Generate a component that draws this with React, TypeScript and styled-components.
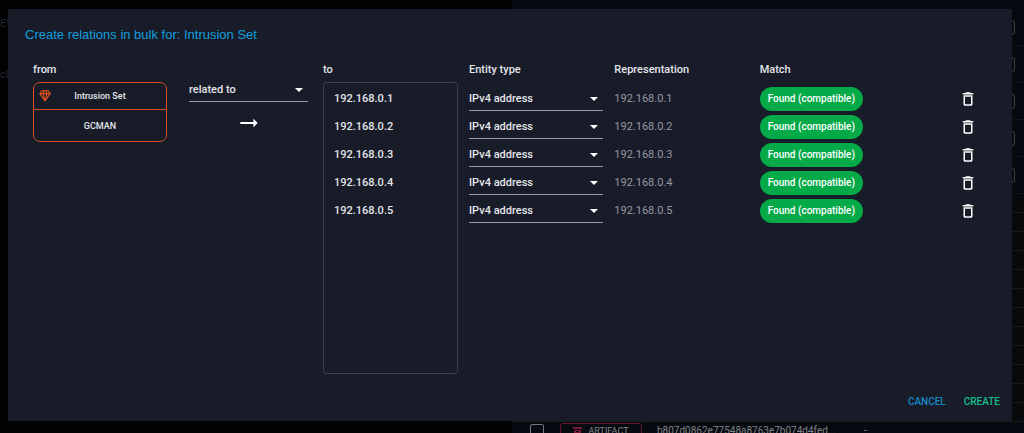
import React from 'react';
import styled, { createGlobalStyle } from 'styled-components';

const GlobalStyle = createGlobalStyle`
  *, *::before, *::after { box-sizing: border-box; }
  body {
    margin: 0;
    background: #010204;
    color: #e4e6ea;
    font-family: Roboto, "Liberation Sans", sans-serif;
    font-size: 11px;
    line-height: 16px;
  }
  button, select, textarea { font: inherit; color: inherit; }
`;

const Screen = styled.div`
  position: relative;
  display: flex;
  min-height: 100vh;
  padding: 9px 12px 12px 8px;
`;

/* Dimmed page behind the dialog */
const Behind = styled.div`
  position: absolute;
  inset: 0;
  display: grid;
  grid-template-columns: 1fr 1fr;
  overflow: hidden;
`;

const SidePane = styled.div`
  display: flex;
  flex-direction: column;
  gap: 35px;
  padding-top: 16px;
  color: #24272a;
`;

const ListPane = styled.div`
  display: flex;
  flex-direction: column;
  padding-top: 9px;
  background: #060a10;
`;

const ListRow = styled.div`
  display: flex;
  flex: none;
  align-items: center;
  justify-content: flex-end;
  height: 37px;
  padding-right: 9px;
  border-bottom: 1px solid #11151a;
`;

const RowAction = styled.span`
  width: 16px;
  height: 15px;
  border: 1px solid #3e4144;
  border-radius: 3px;
`;

const Lines = styled.div`
  flex: 1;
  display: flex;
  flex-direction: column;
  background: #08090b;
`;

const Line = styled.div`
  flex: 1;
  border-bottom: 1px solid #191a1c;
`;

const ArtifactRow = styled.div`
  display: flex;
  flex: none;
  align-items: flex-start;
  height: 11px;
  padding-left: 18px;
  color: #808387;
  font-size: 10px;
  line-height: 18px;
  white-space: nowrap;
`;

const Tick = styled.input`
  appearance: none;
  flex: none;
  width: 14px;
  height: 14px;
  margin: 2px 16px 0 0;
  border: 1px solid #74777b;
  border-radius: 2px;
`;

const ArtifactTag = styled.span`
  display: flex;
  flex: none;
  align-items: center;
  justify-content: center;
  gap: 6px;
  width: 82px;
  height: 16px;
  margin: 1px 15px 0 0;
  border: 1px solid #6a1530;
  border-radius: 3px;
  font-size: 9px;
`;

const ArtifactHash = styled.span`
  width: 207px;
`;

/* Dialog */
const Dialog = styled.section`
  position: relative;
  display: flex;
  flex: 1;
  flex-direction: column;
  min-width: 0;
  border-radius: 2px;
  background: #181c29;
`;

const Title = styled.h2`
  margin: 0;
  padding: 16px 17px 17px;
  color: #129fdd;
  font-family: "Liberation Sans", Arial, sans-serif;
  font-size: 13px;
  font-weight: 400;
  line-height: 20px;
`;

const Content = styled.div`
  display: grid;
  flex: 1;
  grid-template-columns: 134fr 156fr 135fr 530fr;
  padding: 0 24px 0 25px;
`;

const Column = styled.div`
  display: flex;
  flex-direction: column;
  min-width: 0;
`;

const Heading = styled.label`
  height: 20px;
  font-weight: 500;
  line-height: 16px;
`;

const EntityCard = styled.article`
  display: grid;
  grid-template-rows: 27px 1fr;
  height: 60px;
  border: 1px solid #d9501f;
  border-radius: 7px;
  font-size: 9px;
  font-weight: 500;
`;

const EntityKind = styled.div`
  display: grid;
  grid-template-columns: 18px 1fr 18px;
  align-items: center;
  border-bottom: 1px solid #d9501f;
  text-align: center;

  svg { justify-self: end; fill: #e8531f; }
`;

const EntityName = styled.div`
  display: flex;
  align-items: center;
  justify-content: center;
`;

const RelationColumn = styled(Column)`
  padding: 16px 15px 0 22px;

  > svg { align-self: center; margin-top: 8px; fill: #ffffff; }
`;

const SelectBox = styled.span`
  display: grid;
  align-items: center;
  height: 24px;
  border-bottom: 1px solid #999ba3;

  > * { grid-area: 1 / 1; }
  svg { justify-self: end; margin-right: 4px; fill: #ffffff; pointer-events: none; }
`;

const SelectField = styled.select`
  appearance: none;
  width: 100%;
  height: 23px;
  padding: 0 20px 0 0;
  border: 0;
  outline: 0;
  background: transparent;
  font-weight: 500;
`;

const Targets = styled.textarea`
  display: block;
  width: 100%;
  height: 292px;
  padding: 2px 10px;
  border: 1px solid #3d404b;
  border-radius: 3px;
  outline: 0;
  background: transparent;
  font-weight: 500;
  line-height: 28px;
  resize: none;
`;

const Matches = styled.table`
  width: 100%;
  border-collapse: collapse;
  table-layout: fixed;
`;

const MatchesColumn = styled(Column)`
  padding-left: 11px;
`;

const HeadCell = styled.th<{ $width?: string }>`
  width: ${({ $width }) => $width ?? 'auto'};
  height: 23px;
  padding: 0;
  font-weight: 500;
  text-align: left;
  vertical-align: top;
`;

const Cell = styled.td<{ $align?: string }>`
  height: 28px;
  padding: 0 11px 0 0;
  color: #9698a0;
  text-align: ${({ $align }) => $align ?? 'left'};

  ${SelectBox} { color: #e4e6ea; }
`;

const MatchChip = styled.span`
  display: inline-block;
  height: 24px;
  padding: 0 8px;
  border-radius: 12px;
  background: #04aa48;
  color: #ffffff;
  font-size: 10px;
  font-weight: 500;
  line-height: 24px;
  vertical-align: middle;
`;

const IconButton = styled.button`
  padding: 0;
  border: 0;
  background: transparent;
  vertical-align: middle;
  cursor: pointer;

  svg { display: block; fill: #ffffff; }
`;

const Actions = styled.footer`
  display: flex;
  justify-content: flex-end;
  gap: 18px;
  padding: 0 12px 11px;
`;

const TextButton = styled.button<{ $color: string }>`
  padding: 0;
  border: 0;
  background: transparent;
  color: ${({ $color }) => $color};
  font-size: 10px;
  font-weight: 500;
  line-height: 16px;
  text-transform: uppercase;
  cursor: pointer;
`;

const addresses = ['192.168.0.1', '192.168.0.2', '192.168.0.3', '192.168.0.4', '192.168.0.5'];

const Caret = () => (
  <svg width="10" height="6" viewBox="0 0 10 6" aria-hidden="true">
    <path d="M1 1h8L5 5z" />
  </svg>
);

const DiamondIcon = () => (
  <svg width="14" height="14" viewBox="0 0 24 24" aria-hidden="true">
    <path d="M16,9H19L14,16M10,9H14L12,17M5,9H8L10,16M15,4H17L19,7H16M11,4H13L14,7H10M7,4H9L8,7H5M6,2L2,8L12,22L22,8L18,2H6Z" />
  </svg>
);

const ArrowIcon = () => (
  <svg width="26" height="26" viewBox="0 0 24 24" aria-hidden="true">
    <path d="M16.01 11H4v2h12.01v3L20 12l-3.99-4v3z" />
  </svg>
);

const TrashIcon = () => (
  <svg width="18" height="18" viewBox="0 0 24 24" aria-hidden="true">
    <path d="M6 19c0 1.1.9 2 2 2h8c1.1 0 2-.9 2-2V7H6v12zM8 9h8v10H8V9zm7.5-5l-1-1h-5l-1 1H5v2h14V4h-3.5z" />
  </svg>
);

const ArchiveIcon = () => (
  <svg width="9" height="9" viewBox="0 0 9 9" aria-hidden="true">
    <path fill="#7a1836" fillRule="evenodd" d="M0 0h9v2H0zM1 3h7v6H1zM3 4v1h3V4z" />
  </svg>
);

export default function App() {
  return (
    <>
      <GlobalStyle />
      <Screen>
        <Behind aria-hidden="true">
          <SidePane>
            <span>EV</span>
            <span>cl</span>
          </SidePane>
          <ListPane>
            {addresses.map((address) => (
              <ListRow key={address}>
                <RowAction />
              </ListRow>
            ))}
            <Lines>
              {Array.from({ length: 12 }, (_, i) => (
                <Line key={i} />
              ))}
            </Lines>
            <ArtifactRow>
              <Tick type="checkbox" aria-label="Select artifact" />
              <ArtifactTag>
                <ArchiveIcon />
                ARTIFACT
              </ArtifactTag>
              <ArtifactHash>b807d0862e77548a8763e7b074d4fed...</ArtifactHash>
              <span>-</span>
            </ArtifactRow>
          </ListPane>
        </Behind>

        <Dialog role="dialog" aria-labelledby="dialog-title">
          <Title id="dialog-title">Create relations in bulk for: Intrusion Set</Title>
          <Content>
            <Column>
              <Heading as="span">from</Heading>
              <EntityCard>
                <EntityKind>
                  <DiamondIcon />
                  <span>Intrusion Set</span>
                </EntityKind>
                <EntityName>GCMAN</EntityName>
              </EntityCard>
            </Column>

            <RelationColumn>
              <SelectBox>
                <SelectField aria-label="Relation type" defaultValue="related to">
                  <option>related to</option>
                </SelectField>
                <Caret />
              </SelectBox>
              <ArrowIcon />
            </RelationColumn>

            <Column>
              <Heading htmlFor="targets">to</Heading>
              <Targets id="targets" spellCheck={false} defaultValue={addresses.join('\n')} />
            </Column>

            <MatchesColumn>
              <Matches>
                <thead>
                  <tr>
                    <HeadCell $width="28%">Entity type</HeadCell>
                    <HeadCell $width="28%">Representation</HeadCell>
                    <HeadCell $width="28%">Match</HeadCell>
                    <HeadCell aria-label="Remove" />
                  </tr>
                </thead>
                <tbody>
                  {addresses.map((address) => (
                    <tr key={address}>
                      <Cell>
                        <SelectBox>
                          <SelectField
                            aria-label={`Entity type of ${address}`}
                            defaultValue="IPv4 address"
                          >
                            <option>IPv4 address</option>
                          </SelectField>
                          <Caret />
                        </SelectBox>
                      </Cell>
                      <Cell>{address}</Cell>
                      <Cell>
                        <MatchChip>Found (compatible)</MatchChip>
                      </Cell>
                      <Cell $align="right">
                        <IconButton type="button" aria-label={`Remove ${address}`}>
                          <TrashIcon />
                        </IconButton>
                      </Cell>
                    </tr>
                  ))}
                </tbody>
              </Matches>
            </MatchesColumn>
          </Content>
          <Actions>
            <TextButton type="button" $color="#1787c4">Cancel</TextButton>
            <TextButton type="button" $color="#12bd8c">Create</TextButton>
          </Actions>
        </Dialog>
      </Screen>
    </>
  );
}
